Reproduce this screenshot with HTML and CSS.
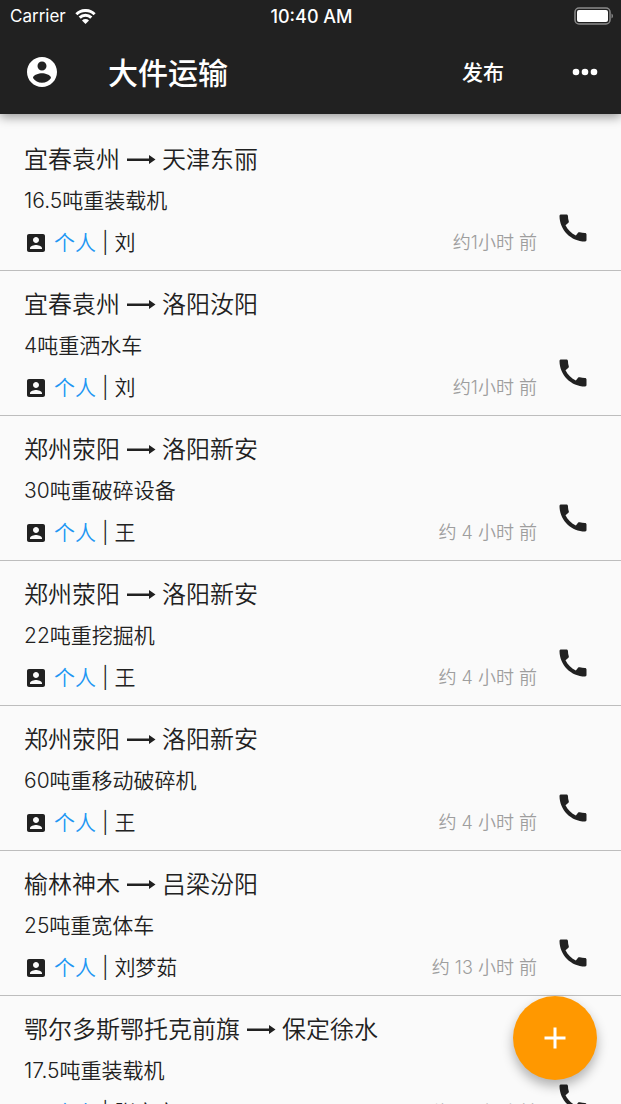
FILE: index.html
```html
<!DOCTYPE html>
<html lang="zh-CN">
<head>
    <meta charset="UTF-8">
    <meta name="viewport" content="width=device-width, initial-scale=1">
    <title>大件运输</title>
    <link rel="stylesheet" href="styles.css">
</head>
<body>
    <svg class="sprite" aria-hidden="true">
        <symbol id="icon-contact" viewBox="0 0 24 24">
            <path d="M3 5v14c0 1.1.89 2 2 2h14c1.1 0 2-.9 2-2V5c0-1.100-.9-2-2-2H5c-1.110 0-2 .9-2 2zm12 4c0 1.660-1.340 3-3 3s-3-1.340-3-3 1.340-3 3-3 3 1.340 3 3zm-9 8c0-2 4-3.100 6-3.100s6 1.100 6 3.100v1H6v-1z"/>
        </symbol>
        <symbol id="icon-phone" viewBox="0 0 24 24">
            <path d="M20.010 15.380c-1.230 0-2.420-.2-3.530-.56-.35-.12-.74-.03-1.010.24l-1.570 1.970c-2.830-1.350-5.480-3.900-6.890-6.830l1.950-1.660c.27-.28.35-.67.24-1.020-.37-1.110-.56-2.300-.56-3.530 0-.54-.45-.99-.99-.99H4.190C3.650 3 3 3.240 3 3.990 3 13.280 10.730 21 20.010 21c.71 0 .99-.63.99-1.180v-3.450c0-.54-.45-.99-.99-.99z"/>
        </symbol>
        <symbol id="icon-arrow" viewBox="0 0 30 12">
            <path d="M1 4.500h22V1l6.500 4.500L23 10V7H1z"/>
        </symbol>
    </svg>

    <div class="app">
        <header class="app-header">
            <div class="status-bar">
                <div class="carrier">
                    <span>Carrier</span>
                    <svg class="wifi" viewBox="0 0 21 15">
                        <path d="M1.400 5.200a13 13 0 0 1 18.200 0M4.700 8.600a8.300 8.300 0 0 1 11.600 0"/>
                        <path class="wifi-dot" d="M10.500 15 7 11.500a5 5 0 0 1 7 0z"/>
                    </svg>
                </div>
                <span class="clock">10:40 AM</span>
                <div class="battery-wrap">
                    <svg class="battery" viewBox="0 0 40 18">
                        <rect class="battery-case" x="2" y="1" width="35" height="16" rx="4"/>
                        <rect x="4" y="3" width="31" height="12" rx="2"/>
                        <path class="battery-tip" d="M38.500 6.500q1.500 .8 1.500 2.500t-1.500 2.500z"/>
                    </svg>
                </div>
            </div>
            <div class="toolbar">
                <button class="icon-button" aria-label="我的">
                    <svg viewBox="0 0 24 24"><path d="M12 2C6.480 2 2 6.480 2 12s4.480 10 10 10 10-4.480 10-10S17.520 2 12 2zm0 3c1.660 0 3 1.340 3 3s-1.340 3-3 3-3-1.340-3-3 1.340-3 3-3zm0 14.200c-2.500 0-4.710-1.280-6-3.220.03-1.990 4-3.080 6-3.080 1.990 0 5.970 1.090 6 3.080-1.290 1.940-3.500 3.220-6 3.220z"/></svg>
                </button>
                <h1>大件运输</h1>
                <button class="publish">发布</button>
                <button class="icon-button" aria-label="更多">
                    <svg viewBox="0 0 24 24"><circle cx="6" cy="12" r="2.200"/><circle cx="12" cy="12" r="2.200"/><circle cx="18" cy="12" r="2.200"/></svg>
                </button>
            </div>
        </header>

        <ul class="list">
            <li class="item">
                <div class="info">
                    <h2>宜春袁州<svg class="arrow"><use href="#icon-arrow"/></svg>天津东丽</h2>
                    <p>16.5吨重装载机</p>
                    <p class="owner"><svg><use href="#icon-contact"/></svg><span class="type">个人</span> | 刘</p>
                </div>
                <time>约1小时 前</time>
                <button class="icon-button call" aria-label="拨打电话"><svg><use href="#icon-phone"/></svg></button>
            </li>
            <li class="item">
                <div class="info">
                    <h2>宜春袁州<svg class="arrow"><use href="#icon-arrow"/></svg>洛阳汝阳</h2>
                    <p>4吨重洒水车</p>
                    <p class="owner"><svg><use href="#icon-contact"/></svg><span class="type">个人</span> | 刘</p>
                </div>
                <time>约1小时 前</time>
                <button class="icon-button call" aria-label="拨打电话"><svg><use href="#icon-phone"/></svg></button>
            </li>
            <li class="item">
                <div class="info">
                    <h2>郑州荥阳<svg class="arrow"><use href="#icon-arrow"/></svg>洛阳新安</h2>
                    <p>30吨重破碎设备</p>
                    <p class="owner"><svg><use href="#icon-contact"/></svg><span class="type">个人</span> | 王</p>
                </div>
                <time>约 4 小时 前</time>
                <button class="icon-button call" aria-label="拨打电话"><svg><use href="#icon-phone"/></svg></button>
            </li>
            <li class="item">
                <div class="info">
                    <h2>郑州荥阳<svg class="arrow"><use href="#icon-arrow"/></svg>洛阳新安</h2>
                    <p>22吨重挖掘机</p>
                    <p class="owner"><svg><use href="#icon-contact"/></svg><span class="type">个人</span> | 王</p>
                </div>
                <time>约 4 小时 前</time>
                <button class="icon-button call" aria-label="拨打电话"><svg><use href="#icon-phone"/></svg></button>
            </li>
            <li class="item">
                <div class="info">
                    <h2>郑州荥阳<svg class="arrow"><use href="#icon-arrow"/></svg>洛阳新安</h2>
                    <p>60吨重移动破碎机</p>
                    <p class="owner"><svg><use href="#icon-contact"/></svg><span class="type">个人</span> | 王</p>
                </div>
                <time>约 4 小时 前</time>
                <button class="icon-button call" aria-label="拨打电话"><svg><use href="#icon-phone"/></svg></button>
            </li>
            <li class="item">
                <div class="info">
                    <h2>榆林神木<svg class="arrow"><use href="#icon-arrow"/></svg>吕梁汾阳</h2>
                    <p>25吨重宽体车</p>
                    <p class="owner"><svg><use href="#icon-contact"/></svg><span class="type">个人</span> | 刘梦茹</p>
                </div>
                <time>约 13 小时 前</time>
                <button class="icon-button call" aria-label="拨打电话"><svg><use href="#icon-phone"/></svg></button>
            </li>
            <li class="item">
                <div class="info">
                    <h2>鄂尔多斯鄂托克前旗<svg class="arrow"><use href="#icon-arrow"/></svg>保定徐水</h2>
                    <p>17.5吨重装载机</p>
                    <p class="owner"><svg><use href="#icon-contact"/></svg><span class="type">个人</span> | 张文文</p>
                </div>
                <time>约 13 小时 前</time>
                <button class="icon-button call" aria-label="拨打电话"><svg><use href="#icon-phone"/></svg></button>
            </li>
        </ul>

        <button class="fab" aria-label="添加">
            <svg viewBox="0 0 24 24"><path d="M19 13h-6v6h-2v-6H5v-2h6V5h2v6h6v2z"/></svg>
        </button>
    </div>
</body>
</html>
```
FILE: styles.css
```css
* {
    box-sizing: border-box;
}

body, h1, h2, p, ul {
    margin: 0;
    padding: 0;
}

body {
    font-family: Inter, "Noto Sans CJK SC", sans-serif;
    color: #212121;
    background-color: #fafafa;
}

button {
    border: none;
    padding: 0;
    background: none;
    color: inherit;
    font-family: inherit;
    cursor: pointer;
}

svg {
    display: block;
    fill: currentColor;
}

.sprite {
    display: none;
}

.app {
    display: flex;
    flex-direction: column;
    height: 100vh;
    overflow: hidden;
}

/* header */

.app-header {
    position: relative;
    z-index: 1;
    color: white;
    background-color: #212121;
    box-shadow: 0 3px 10px rgba(0, 0, 0, 0.4);
}

.status-bar {
    display: grid;
    grid-template-columns: 1fr auto 1fr;
    align-items: center;
    height: 32px;
    padding: 0 8px 0 10px;
    font-size: 17px;
}

.carrier {
    display: flex;
    align-items: center;
    gap: 9px;
}

.wifi {
    width: 21px;
    height: 15px;
    fill: none;
    stroke: currentColor;
    stroke-width: 3;
}

.wifi-dot {
    fill: currentColor;
    stroke: none;
}

.clock {
    font-size: 18px;
    font-weight: 500;
}

.battery-wrap {
    display: flex;
    justify-content: flex-end;
}

.battery {
    width: 40px;
    height: 18px;
}

.battery-case {
    fill: none;
    stroke: #8a8a8a;
    stroke-width: 1.5;
}

.battery-tip {
    fill: #8a8a8a;
}

.toolbar {
    display: flex;
    align-items: center;
    height: 82px;
    padding: 0 18px 2px 24px;
}

.toolbar h1 {
    flex: 1;
    margin-left: 48px;
    padding-bottom: 2px;
    font-size: 30px;
    font-weight: 500;
}

.publish {
    margin-right: 63px;
    padding-bottom: 2px;
    font-size: 21px;
    font-weight: 500;
}

.icon-button {
    width: 36px;
    height: 36px;
}

.icon-button svg {
    width: 36px;
    height: 36px;
}

/* list */

.list {
    flex: 1;
    min-height: 0;
    padding-top: 12px;
    overflow-y: auto;
    scrollbar-width: none;
    list-style: none;
    font-weight: 350;
}

.item {
    display: flex;
    align-items: flex-end;
    padding: 14px 30px 6px 24px;
    border-bottom: 1px solid #bdbdbd;
}

.info {
    flex: 1;
}

.info h2 {
    display: flex;
    align-items: center;
    font-size: 24px;
    font-weight: 350;
    line-height: 40px;
}

.arrow {
    width: 30px;
    height: 12px;
    margin: 0 6px;
}

.info p {
    font-size: 21px;
    line-height: 42px;
}

.info .owner {
    display: flex;
    align-items: center;
    white-space: pre;
}

.owner svg {
    width: 24px;
    height: 24px;
    margin-right: 6px;
}

.type {
    color: #2196f3;
}

.item time {
    margin-right: 18px;
    color: #9e9e9e;
    font-size: 18px;
    line-height: 42px;
}

.call {
    margin-bottom: 18px;
}

.fab {
    position: fixed;
    right: 24px;
    bottom: 24px;
    z-index: 2;
    display: flex;
    align-items: center;
    justify-content: center;
    width: 84px;
    height: 84px;
    border-radius: 50%;
    color: white;
    background-color: #ff9800;
    box-shadow: 0 6px 12px rgba(0, 0, 0, 0.3);
}

.fab svg {
    width: 36px;
    height: 36px;
}
```
